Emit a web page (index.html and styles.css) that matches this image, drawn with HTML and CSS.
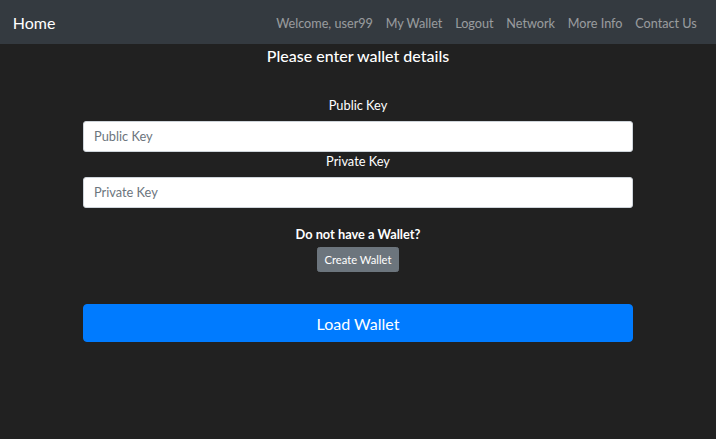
FILE: index.html
```html
<!DOCTYPE html>
<html lang="en">
<head>
<meta charset="utf-8">
<title>Wallet</title>
<link rel="stylesheet" href="styles.css">
</head>
<body>
<nav class="navbar">
  <a class="brand" href="#">Home</a>
  <ul class="nav-links">
    <li><a href="#">Welcome, user99</a></li>
    <li><a href="#">My Wallet</a></li>
    <li><a href="#">Logout</a></li>
    <li><a href="#">Network</a></li>
    <li><a href="#">More Info</a></li>
    <li><a href="#">Contact Us</a></li>
  </ul>
</nav>
<main class="main">
  <h5 class="title">Please enter wallet details</h5>
  <form class="wallet-form">
    <label class="field-label" for="pub">Public Key</label>
    <input class="field-input" id="pub" type="text" placeholder="Public Key">
    <label class="field-label" for="priv">Private Key</label>
    <input class="field-input" id="priv" type="text" placeholder="Private Key">
    <div class="create-block">
      <p class="create-text">Do not have a Wallet?</p>
      <button type="button" class="btn btn-secondary">Create Wallet</button>
    </div>
    <button type="button" class="btn btn-primary">Load Wallet</button>
  </form>
</main>
</body>
</html>
```
FILE: styles.css
```css
* { box-sizing: border-box; }
html, body { margin: 0; padding: 0; }
body {
  background: #212121;
  color: #fff;
  font-family: "Segoe UI", Lato, "Noto Sans", sans-serif;
  font-size: 12.8px;
  line-height: 1.5;
  height: 439px;
}
.navbar {
  height: 44px;
  background: #343a40;
  display: flex;
  align-items: center;
  justify-content: space-between;
  padding: 2px 12.8px 0;
}
.brand {
  color: #fff;
  text-decoration: none;
  font-size: 16px;
  line-height: 24px;
}
.nav-links {
  list-style: none;
  margin: 0;
  padding: 0;
  display: flex;
}
.nav-links a {
  display: block;
  padding: 7.4px 6.4px 5.4px;
  font-size: 12.65px;
  color: rgba(255,255,255,.5);
  text-decoration: none;
}
.main {
  display: flex;
  flex-direction: column;
  align-items: center;
}
.title {
  margin: 1.5px 0 0;
  font-size: 16px;
  font-weight: 500;
  line-height: 19.2px;
}
.wallet-form {
  width: 550px;
  margin-top: 31px;
  display: flex;
  flex-direction: column;
  align-items: center;
}
.field-label {
  display: block;
  text-align: center;
  line-height: 19.2px;
  margin-bottom: 6.4px;
}
.field-input {
  width: 100%;
  height: 30.4px;
  padding: 0 10px;
  border: 1px solid #ced4da;
  border-radius: 3px;
  background: #fff;
  color: #495057;
  font-family: inherit;
  font-size: 12.8px;
}
.field-input::placeholder { color: #6c757d; }
.create-block {
  margin-top: 17px;
  display: flex;
  flex-direction: column;
  align-items: center;
}
.create-text {
  margin: 0 0 3px;
  font-weight: 700;
  line-height: 19.2px;
}
.btn {
  border: 1px solid transparent;
  color: #fff;
  font-family: inherit;
  cursor: pointer;
}
.btn-secondary {
  background: #6c757d;
  border-color: #6c757d;
  font-size: 11.2px;
  height: 25px;
  padding: 0 6.4px;
  border-radius: 2.5px;
}
.btn-primary {
  background: #007bff;
  border-color: #007bff;
  width: 100%;
  height: 38.4px;
  margin-top: 32px;
  font-size: 16px;
  border-radius: 4px;
}
```
